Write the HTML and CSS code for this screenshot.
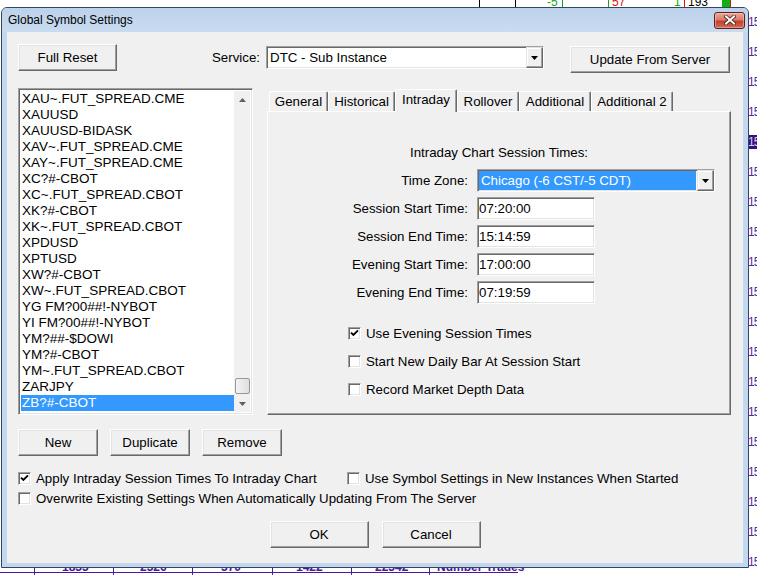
FILE: index.html
```html
<!DOCTYPE html>
<html>
<head>
<meta charset="utf-8">
<title>Global Symbol Settings</title>
<link rel="stylesheet" href="styles.css">
</head>
<body>
<div class="desk">
  <div class="backdrop">
    <div class="tline l1"></div>
    <div class="tline l2"></div>
    <div class="tline l3 green"></div>
    <div class="tline l4 green"></div>
    <div class="tline l5 red"></div>
    <div class="tline l6 red"></div>
    <div class="tblock"></div>
    <div class="ttext t1 green-t">-5</div>
    <div class="ttext t2 red-t">57</div>
    <div class="ttext t3 green-t">1</div>
    <div class="ttext t4">193</div>

    <div class="rcol">
      <div class="rnum">15</div><div class="rnum">15</div><div class="rnum">15</div><div class="rnum">15</div>
      <div class="rnum hl"><span>15</span></div>
      <div class="rnum">15</div><div class="rnum">15</div><div class="rnum">15</div><div class="rnum">15</div>
      <div class="rnum">15</div><div class="rnum">15</div><div class="rnum">15</div><div class="rnum">15</div>
      <div class="rnum">15</div><div class="rnum">15</div><div class="rnum">15</div><div class="rnum">15</div>
      <div class="rnum">15</div><div class="rnum">15</div>
    </div>

    <div class="bline"></div>
    <div class="bv v1"></div><div class="bv v2"></div><div class="bv v3"></div>
    <div class="bv v4"></div><div class="bv v5"></div><div class="bv v6"></div>
    <div class="btext b1">1833</div>
    <div class="btext b2">2326</div>
    <div class="btext b3">370</div>
    <div class="btext b4">1422</div>
    <div class="btext b5">22342</div>
    <div class="btext b6">Number Trades</div>
  </div>

  <div class="window">
    <div class="titlebar">
      <span class="title">Global Symbol Settings</span>
      <span class="close">
        <svg width="12" height="10" viewBox="0 0 12 10">
          <path d="M2 1.5 L10 8.5 M10 1.5 L2 8.5" stroke="#4a1a14" stroke-width="3.6" stroke-linecap="square"/>
          <path d="M2 1.5 L10 8.5 M10 1.5 L2 8.5" stroke="#ffffff" stroke-width="2" stroke-linecap="square"/>
        </svg>
      </span>
    </div>
    <div class="client">
      <div class="toprow">
        <div class="btn btn-full">Full Reset</div>
        <div class="service">
          <span class="lbl">Service:</span>
          <div class="combo sunken combo-service">
            <span class="cval">DTC - Sub Instance</span>
            <span class="ddbtn"><svg width="7" height="4" viewBox="0 0 7 4"><path d="M0 0H7L3.5 4Z" fill="#000"/></svg></span>
          </div>
        </div>
        <div class="btn btn-update">Update From Server</div>
      </div>

      <div class="midrow">
        <div class="listbox sunken">
          <div class="items">
            <div class="item">XAU~.FUT_SPREAD.CME</div>
            <div class="item">XAUUSD</div>
            <div class="item">XAUUSD-BIDASK</div>
            <div class="item">XAV~.FUT_SPREAD.CME</div>
            <div class="item">XAY~.FUT_SPREAD.CME</div>
            <div class="item">XC?#-CBOT</div>
            <div class="item">XC~.FUT_SPREAD.CBOT</div>
            <div class="item">XK?#-CBOT</div>
            <div class="item">XK~.FUT_SPREAD.CBOT</div>
            <div class="item">XPDUSD</div>
            <div class="item">XPTUSD</div>
            <div class="item">XW?#-CBOT</div>
            <div class="item">XW~.FUT_SPREAD.CBOT</div>
            <div class="item">YG FM?00##!-NYBOT</div>
            <div class="item">YI FM?00##!-NYBOT</div>
            <div class="item">YM?##-$DOWI</div>
            <div class="item">YM?#-CBOT</div>
            <div class="item">YM~.FUT_SPREAD.CBOT</div>
            <div class="item">ZARJPY</div>
            <div class="item sel">ZB?#-CBOT</div>
            <div class="item">ZB?!.FUT_SPREAD.CBOT</div>
          </div>
          <div class="vscroll">
            <div class="sbtn"><svg width="7" height="4" viewBox="0 0 7 4"><path d="M0 4L3.5 0L7 4Z" fill="#606060"/></svg></div>
            <div class="track"><div class="thumb"></div></div>
            <div class="sbtn"><svg width="7" height="4" viewBox="0 0 7 4"><path d="M0 0H7L3.5 4Z" fill="#606060"/></svg></div>
          </div>
        </div>

        <div class="tabs">
          <div class="tabstrip">
            <div class="tab w-general">General</div>
            <div class="tab w-hist">Historical</div>
            <div class="tab sel w-intra">Intraday</div>
            <div class="tab w-roll">Rollover</div>
            <div class="tab w-add">Additional</div>
            <div class="tab w-add2">Additional 2</div>
          </div>
          <div class="panel">
            <div class="heading">Intraday Chart Session Times:</div>
            <div class="form">
              <span class="flbl">Time Zone:</span>
              <div class="combo sunken combo-tz">
                <span class="cval selval">Chicago (-6 CST/-5 CDT)</span>
                <span class="ddbtn"><svg width="7" height="4" viewBox="0 0 7 4"><path d="M0 0H7L3.5 4Z" fill="#000"/></svg></span>
              </div>
              <span class="flbl">Session Start Time:</span>
              <div class="field sunken">07:20:00</div>
              <span class="flbl">Session End Time:</span>
              <div class="field sunken">15:14:59</div>
              <span class="flbl">Evening Start Time:</span>
              <div class="field sunken">17:00:00</div>
              <span class="flbl">Evening End Time:</span>
              <div class="field sunken">07:19:59</div>
            </div>
            <div class="checks">
              <div class="chk"><span class="cb"><svg width="9" height="9" viewBox="0 0 9 9"><path d="M1 3.6L3.4 6L8 1.4" fill="none" stroke="#000" stroke-width="1.9"/></svg></span>Use Evening Session Times</div>
              <div class="chk"><span class="cb"></span>Start New Daily Bar At Session Start</div>
              <div class="chk"><span class="cb"></span>Record Market Depth Data</div>
            </div>
          </div>
        </div>
      </div>

      <div class="btnrow">
        <div class="btn btn-sm">New</div>
        <div class="btn btn-sm">Duplicate</div>
        <div class="btn btn-sm">Remove</div>
      </div>

      <div class="optrow first">
        <div class="chk wide"><span class="cb"><svg width="9" height="9" viewBox="0 0 9 9"><path d="M1 3.6L3.4 6L8 1.4" fill="none" stroke="#000" stroke-width="1.9"/></svg></span>Apply Intraday Session Times To Intraday Chart</div>
        <div class="chk"><span class="cb"></span>Use Symbol Settings in New Instances When Started</div>
      </div>
      <div class="optrow second">
        <div class="chk"><span class="cb"></span>Overwrite Existing Settings When Automatically Updating From The Server</div>
      </div>

      <div class="okrow">
        <div class="btn btn-ok">OK</div>
        <div class="btn btn-ok">Cancel</div>
      </div>
    </div>
  </div>
</div>
</body>
</html>
```

FILE: styles.css
```css
* { box-sizing: border-box; }

html, body {
  margin: 0;
  padding: 0;
  background: #ffffff;
}

.desk {
  position: relative;
  width: 757px;
  height: 575px;
  overflow: hidden;
  background: #ffffff;
  font-family: "Liberation Sans", Arial, sans-serif;
  font-size: 13.3px;
  color: #000;
}

/* ---------- background chart (behind the window) ---------- */
.backdrop { position: absolute; inset: 0; }

.tline { position: absolute; top: 0; width: 1px; height: 8px; background: #000; }
.tline.green { background: #1aa31a; }
.tline.red { background: #e01010; }
.l1 { left: 479px; }
.l2 { left: 515px; }
.l3 { left: 562px; }
.l4 { left: 608px; }
.l5 { left: 684px; }
.l6 { left: 730px; }
.tblock { position: absolute; left: 722px; top: 0; width: 8px; height: 8px; background: #10b010; }
.ttext { position: absolute; top: -5px; font-size: 12px; line-height: 14px; color: #000; }
.green-t { color: #1aa31a; }
.red-t { color: #e01010; }
.t1 { left: 547px; }
.t2 { left: 612px; }
.t3 { left: 674px; }
.t4 { left: 688px; }

.rcol {
  position: absolute;
  left: 748px;
  top: 14px;
  display: flex;
  flex-direction: column;
}
.rnum {
  height: 30px;
  line-height: 16px;
  font-size: 12px;
  letter-spacing: -1px;
  color: #5a24a8;
}
.rnum.hl span {
  display: inline-block;
  background: #35127a;
  color: #d8c8ff;
  line-height: 14px;
  margin-top: 1px;
}

.bline { position: absolute; left: 0; top: 572px; width: 518px; height: 1px; background: #4a1a9a; }
.bv { position: absolute; top: 566px; width: 1px; height: 9px; background: #4a1a9a; }
.v1 { left: 34px; }
.v2 { left: 113px; }
.v3 { left: 192px; }
.v4 { left: 272px; }
.v5 { left: 351px; }
.v6 { left: 429px; }
.btext { position: absolute; top: 561px; font-size: 12px; line-height: 12px; color: #4a1a9a; font-weight: bold; }
.b1 { left: 62px; }
.b2 { left: 140px; }
.b3 { left: 221px; }
.b4 { left: 296px; }
.b5 { left: 375px; }
.b6 { left: 437px; }

/* ---------- window ---------- */
.window {
  position: absolute;
  left: 1px;
  top: 7px;
  width: 748px;
  height: 561px;
  border: 1px solid #33465e;
  border-radius: 6px 6px 0 0;
  background: #c3d7ee;
  display: flex;
  flex-direction: column;
  overflow: hidden;
}

.titlebar {
  height: 24px;
  flex: none;
  display: flex;
  align-items: center;
  justify-content: space-between;
  padding: 0 3px 0 6px;
  background: linear-gradient(to bottom, #bcd2ea, #c8dbf0);
}
.title {
  font-family: "Liberation Sans", Arial, sans-serif;
  font-size: 12px;
  color: #000;
}
.close {
  width: 31px;
  height: 17px;
  border: 1px solid #5c2018;
  border-radius: 3px;
  background: linear-gradient(to bottom, #e9a99c 0%, #d97b6c 45%, #c2402f 55%, #cf6a58 100%);
  display: flex;
  align-items: center;
  justify-content: center;
  box-shadow: inset 0 0 0 1px rgba(255, 220, 210, 0.45);
}

.client {
  flex: none;
  height: 531px;
  margin: 0 5px;
  background: #f0f0f0;
  padding: 12px 0 0 11px;
}

/* ---------- 3D borders ---------- */
.sunken {
  border: 1px solid;
  border-color: #a0a0a0 #ffffff #ffffff #a0a0a0;
  box-shadow: inset 1px 1px 0 #696969, inset -1px -1px 0 #e3e3e3;
  background: #ffffff;
}

.btn {
  display: flex;
  align-items: center;
  justify-content: center;
  height: 27px;
  background: #f0f0f0;
  border: 1px solid;
  border-color: #ffffff #696969 #696969 #ffffff;
  box-shadow: inset -1px -1px 0 #a0a0a0, inset 1px 1px 0 #e3e3e3;
  white-space: nowrap;
}

/* ---------- top row ---------- */
.toprow { display: flex; align-items: flex-start; }
.btn-full { width: 99px; }
.service { display: flex; align-items: center; margin-left: 95px; margin-top: 2px; }
.lbl { white-space: nowrap; }
.btn-update { width: 160px; margin-left: 26px; margin-top: 2px; }

.combo {
  display: flex;
  align-items: stretch;
  height: 23px;
  padding: 1px 0 1px 1px;
}
.combo-service { width: 278px; margin-left: 6px; }
.combo-tz { width: 238px; }
.cval {
  flex: 1;
  display: flex;
  align-items: center;
  padding-left: 2px;
  white-space: nowrap;
  overflow: hidden;
}
.selval { background: #3399ff; color: #ffffff; }
.ddbtn {
  width: 17px;
  flex: none;
  display: flex;
  align-items: center;
  justify-content: center;
  background: #f0f0f0;
  border: 1px solid;
  border-color: #e3e3e3 #696969 #696969 #e3e3e3;
  box-shadow: inset -1px -1px 0 #a0a0a0, inset 1px 1px 0 #ffffff;
  margin: -1px 0 -1px 1px;
}

/* ---------- middle row ---------- */
.midrow { display: flex; margin-top: 15px; }

.listbox {
  width: 235px;
  height: 327px;
  display: flex;
  padding: 2px;
  overflow: hidden;
}
.items { flex: 1; overflow: hidden; }
.item {
  height: 16px;
  line-height: 16px;
  padding-left: 1px;
  font-size: 13.5px;
  white-space: nowrap;
}
.item.sel { background: #3399ff; color: #ffffff; }

.vscroll {
  width: 16px;
  flex: none;
  display: flex;
  flex-direction: column;
  background: #f0f0f0;
}
.sbtn {
  height: 17px;
  flex: none;
  display: flex;
  align-items: center;
  justify-content: center;
}
.track { flex: 1; }
.thumb {
  margin: 270px 0 0 1px;
  width: 15px;
  height: 16px;
  border: 1px solid #979797;
  border-radius: 2px;
  background: linear-gradient(to right, #f4f4f4, #dedede);
}

.tabs {
  width: 464px;
  height: 327px;
  margin-left: 14px;
  display: flex;
  flex-direction: column;
}
.tabstrip {
  height: 23px;
  flex: none;
  display: flex;
  align-items: flex-end;
  padding-left: 2px;
}
.tab {
  height: 20px;
  display: flex;
  align-items: center;
  justify-content: center;
  background: #f0f0f0;
  border-top: 1px solid #ffffff;
  border-left: 1px solid #ffffff;
  border-right: 1px solid #696969;
  box-shadow: inset -1px 0 0 #a0a0a0;
  border-radius: 2px 2px 0 0;
  white-space: nowrap;
}
.tab.sel {
  height: 23px;
  margin-bottom: -1px;
  position: relative;
  z-index: 1;
  padding-bottom: 3px;
}
.w-general { width: 59px; }
.w-hist { width: 67px; }
.w-intra { width: 62px; }
.w-roll { width: 62px; }
.w-add { width: 72px; }
.w-add2 { width: 82px; }

.panel {
  flex: 1;
  border: 1px solid;
  border-color: #ffffff #696969 #696969 #ffffff;
  box-shadow: inset -1px -1px 0 #a0a0a0;
  background: #f0f0f0;
}
.heading {
  margin-top: 33px;
  height: 16px;
  line-height: 16px;
  text-align: center;
}
.form {
  margin-top: 8px;
  display: grid;
  grid-template-columns: 200px auto;
  grid-auto-rows: 23px;
  column-gap: 9px;
  row-gap: 5px;
  align-items: center;
  justify-items: start;
}
.flbl { justify-self: end; white-space: nowrap; }
.field {
  width: 118px;
  height: 23px;
  display: flex;
  align-items: center;
  padding-left: 1px;
}

.checks {
  margin-top: 21px;
  padding-left: 80px;
  display: flex;
  flex-direction: column;
  gap: 12px;
}
.chk {
  display: flex;
  align-items: center;
  height: 16px;
  white-space: nowrap;
}
.cb {
  width: 13px;
  height: 13px;
  flex: none;
  margin-right: 5px;
  border: 1px solid;
  border-color: #a0a0a0 #ffffff #ffffff #a0a0a0;
  box-shadow: inset 1px 1px 0 #696969, inset -1px -1px 0 #e3e3e3;
  background: #ffffff;
  display: flex;
  align-items: center;
  justify-content: center;
}

/* ---------- bottom ---------- */
.btnrow { display: flex; gap: 12px; margin-top: 14px; }
.btn-sm { width: 80px; }

.optrow { display: flex; }
.optrow.first { margin-top: 14px; }
.optrow.second { margin-top: 4px; }
.chk.wide { width: 329px; }

.okrow {
  display: flex;
  justify-content: center;
  gap: 13px;
  margin-top: 15px;
  margin-left: -11px;
}
.btn-ok { width: 99px; }
```
